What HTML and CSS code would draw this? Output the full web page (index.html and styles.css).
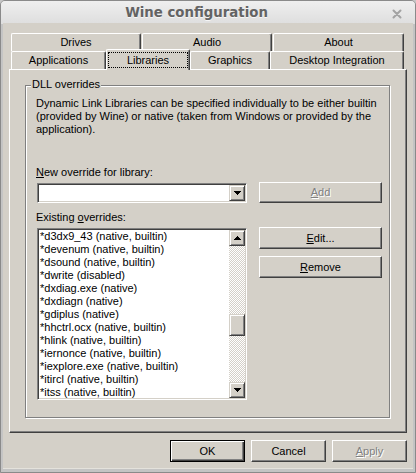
FILE: index.html
```html
<!DOCTYPE html>
<html>
<head>
<meta charset="utf-8">
<link rel="stylesheet" href="styles.css">
</head>
<body>
<div class="window">
  <div class="titlebar">
    <span class="title">Wine configuration</span>
    <span class="close"><svg width="10" height="10" viewBox="0 0 10 10"><path d="M1.5 1.5L8.5 8.5M8.5 1.5L1.5 8.5" stroke="#a3a3a3" stroke-width="2" stroke-linecap="round"/></svg></span>
  </div>
  <div class="client">
    <div class="tabctl">
      <div class="tabrow">
        <div class="tab w130">Drives</div>
        <div class="tab w130">Audio</div>
        <div class="tab w131">About</div>
      </div>
      <div class="tabrow front">
        <div class="tab w95">Applications</div>
        <div class="tab sel w84"><span class="focus">Libraries</span></div>
        <div class="tab w80">Graphics</div>
        <div class="tab w134">Desktop Integration</div>
      </div>
      <div class="panel">
        <div class="group">
          <span class="legend">DLL overrides</span>
          <p class="desc">Dynamic Link Libraries can be specified individually to be either builtin<br>(provided by Wine) or native (taken from Windows or provided by the<br>application).</p>
          <div class="label l1"><u>N</u>ew override for library:</div>
          <div class="row r1">
            <div class="combo">
              <div class="sbtn"><svg width="7" height="4" viewBox="0 0 7 4"><path d="M0 0h7v1H0z M1 1h5v1H1z M2 2h3v1H2z M3 3h1v1H3z" fill="#000"/></svg></div>
            </div>
            <div class="btn add disabled"><span><u>A</u>dd</span></div>
          </div>
          <div class="label l2">Existing <u>o</u>verrides:</div>
          <div class="row r2">
            <div class="listbox">
              <ul class="items">
                <li>*d3dx9_43 (native, builtin)</li>
                <li>*devenum (native, builtin)</li>
                <li>*dsound (native, builtin)</li>
                <li>*dwrite (disabled)</li>
                <li>*dxdiag.exe (native)</li>
                <li>*dxdiagn (native)</li>
                <li>*gdiplus (native)</li>
                <li>*hhctrl.ocx (native, builtin)</li>
                <li>*hlink (native, builtin)</li>
                <li>*iernonce (native, builtin)</li>
                <li>*iexplore.exe (native, builtin)</li>
                <li>*itircl (native, builtin)</li>
                <li>*itss (native, builtin)</li>
              </ul>
              <div class="scrollbar">
                <div class="sbtn"><svg width="7" height="4" viewBox="0 0 7 4"><path d="M3 0h1v1H3z M2 1h3v1H2z M1 2h5v1H1z M0 3h7v1H0z" fill="#000"/></svg></div>
                <div class="track"><div class="thumb" style="margin-top:68px"></div></div>
                <div class="sbtn"><svg width="7" height="4" viewBox="0 0 7 4"><path d="M0 0h7v1H0z M1 1h5v1H1z M2 2h3v1H2z M3 3h1v1H3z" fill="#000"/></svg></div>
              </div>
            </div>
            <div class="btncol">
              <div class="btn"><span><u>E</u>dit...</span></div>
              <div class="btn"><span><u>R</u>emove</span></div>
            </div>
          </div>
        </div>
      </div>
    </div>
    <div class="actions">
      <div class="btn dlg default">OK</div>
      <div class="btn dlg">Cancel</div>
      <div class="btn dlg disabled"><span><u>A</u>pply</span></div>
    </div>
  </div>
</div>
</body>
</html>
```

FILE: styles.css
```css
html, body {
  margin: 0;
  padding: 0;
}
body {
  width: 416px;
  height: 473px;
  overflow: hidden;
  background: #c6c6c6;
  font-family: "Liberation Sans", Arial, sans-serif;
  font-size: 11px;
  color: #000;
}
.window {
  box-sizing: border-box;
  width: 416px;
  height: 473px;
  border: 1px solid #8a8a8a;
  border-radius: 5px 5px 0 0;
  background: #c4c4c4;
  padding: 0 2px 3px 2px;
  display: flex;
  flex-direction: column;
}
.titlebar {
  height: 23px;
  margin: 0 -2px;
  display: flex;
  align-items: center;
  background: linear-gradient(#efefef, #dedede);
  border-radius: 4px 4px 0 0;
}
.title {
  flex: 1;
  text-align: center;
  font-family: "DejaVu Sans", sans-serif;
  font-weight: bold;
  font-size: 13.3px;
  color: #636363;
  text-shadow: 0 1px #f6f6f6;
  line-height: 23px;
}
.close {
  margin-right: 13px;
  display: flex;
  margin-top: 2px;
}
.client {
  flex: 1;
  background: #d4d0c8;
  border-top: 1px solid #d4d0c8;
  margin-top: -1px;
  border-bottom: 1px solid #e4e2dc;
}
.tabctl {
  margin: 9px 0 0 6px;
  width: 398px;
}
.tabrow {
  display: flex;
  height: 18px;
  padding-left: 2px;
  align-items: flex-end;
}
.tabrow .tab + .tab {
  margin-left: 1px;
}
.tabrow.front .tab + .tab {
  margin-left: 0;
}
.tab {
  box-sizing: border-box;
  height: 18px;
  border-top: 1px solid #fff;
  border-left: 1px solid #fff;
  border-right: 1px solid #404040;
  box-shadow: inset -1px 0 #808080;
  border-radius: 2px 2px 0 0;
  background: #d4d0c8;
  display: flex;
  align-items: center;
  justify-content: center;
  line-height: 13px;
  white-space: nowrap;
}
.w130 { width: 130px; }
.w131 { width: 131px; }
.w95 { width: 95px; }
.w84 { width: 84px; }
.w80 { width: 80px; }
.w134 { width: 134px; }
.tab.sel {
  height: 21px;
  margin-bottom: -1px;
  position: relative;
  z-index: 1;
  align-items: stretch;
  padding: 2px 1px 2px 1px;
}
.focus {
  flex: 1;
  border: 1px dotted #000;
  display: flex;
  align-items: center;
  justify-content: center;
}
.panel {
  box-sizing: border-box;
  height: 364px;
  border: 1px solid;
  border-color: #fff #404040 #404040 #fff;
  box-shadow: inset -1px -1px #808080;
  padding: 15px 0 0 15px;
}
.group {
  position: relative;
  box-sizing: border-box;
  width: 365px;
  height: 333px;
  border: 1px solid #808080;
  box-shadow: inset 1px 1px #fff, 1px 1px #fff;
  padding: 11px 7px 0 10px;
}
.legend {
  position: absolute;
  top: -8px;
  left: 5px;
  padding: 0 1px;
  background: #d4d0c8;
  line-height: 13px;
}
.desc {
  margin: 0;
  line-height: 13px;
  white-space: nowrap;
}
.label {
  line-height: 13px;
}
.l1 { margin-top: 30px; }
.l2 { margin-top: 8px; }
.row {
  display: flex;
  padding-left: 1px;
  gap: 12px;
}
.r1 {
  margin-top: 3px;
  align-items: flex-end;
}
.r2 {
  margin-top: 3px;
  align-items: flex-start;
}
.combo {
  box-sizing: border-box;
  width: 210px;
  height: 20px;
  border: 1px solid;
  border-color: #808080 #fff #fff #808080;
  box-shadow: inset 1px 1px #404040, inset -1px -1px #d4d0c8;
  background: #fff;
  padding: 1px;
  display: flex;
  justify-content: flex-end;
}
.listbox {
  box-sizing: border-box;
  width: 210px;
  height: 172px;
  margin-top: 1px;
  border: 1px solid;
  border-color: #808080 #fff #fff #808080;
  box-shadow: inset 1px 1px #404040, inset -1px -1px #d4d0c8;
  background: #fff;
  padding: 1px;
  display: flex;
}
.items {
  flex: 1;
  margin: 0;
  padding: 0 0 0 1px;
  list-style: none;
  overflow: hidden;
}
.items li {
  line-height: 13px;
  height: 13px;
  white-space: nowrap;
}
.scrollbar {
  width: 16px;
  display: flex;
  flex-direction: column;
}
.track {
  flex: 1;
  background-color: #d4d0c8;
  background-image: conic-gradient(#fff 25%, #d4d0c8 0 50%, #fff 0 75%, #d4d0c8 0);
  background-size: 2px 2px;
}
.thumb, .sbtn {
  box-sizing: border-box;
  width: 16px;
  border: 1px solid;
  border-color: #d4d0c8 #404040 #404040 #d4d0c8;
  box-shadow: inset 1px 1px #fff, inset -1px -1px #808080;
  background: #d4d0c8;
}
.thumb {
  height: 22px;
}
.sbtn {
  height: 16px;
  display: flex;
  align-items: center;
  justify-content: center;
}
.sbtn svg {
  display: block;
}
.btn {
  box-sizing: border-box;
  width: 123px;
  height: 22px;
  border: 1px solid;
  border-color: #fff #404040 #404040 #fff;
  box-shadow: inset -1px -1px #808080;
  background: #d4d0c8;
  display: flex;
  align-items: center;
  justify-content: center;
  line-height: 13px;
}
.btn.add {
  height: 21px;
}
.btncol {
  display: flex;
  flex-direction: column;
  gap: 7px;
}
.disabled {
  color: #808080;
  text-shadow: 1px 1px #fff;
}
.actions {
  display: flex;
  justify-content: flex-end;
  gap: 6px;
  padding: 7px 6px 0 0;
}
.btn.dlg {
  width: 75px;
}
.btn.default {
  border: 1px solid #000;
  box-shadow: inset 1px 1px #fff, inset -1px -1px #404040, inset -2px -2px #808080;
}
```
